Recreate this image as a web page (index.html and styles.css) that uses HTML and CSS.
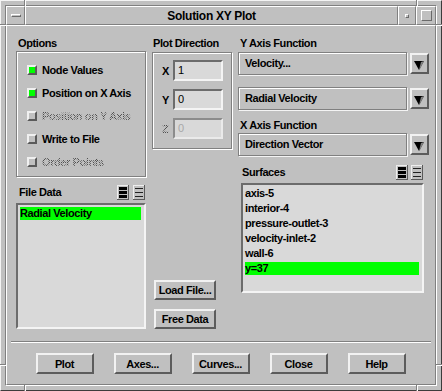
FILE: index.html
```html
<!DOCTYPE html>
<html>
<head>
	<title>Solution XY Plot</title>
	<link rel="stylesheet" href="styles.css">
</head>
<body>
	<!-- window frame with the little resize notches in the corners -->
	<div class="window">
		<span class="notch-v nv-tl"></span>
		<span class="notch-v nv-tr"></span>
		<span class="notch-v nv-bl"></span>
		<span class="notch-v nv-br"></span>
		<span class="notch-h nh-lt"></span>
		<span class="notch-h nh-lb"></span>
		<span class="notch-h nh-rt"></span>
		<span class="notch-h nh-rb"></span>

		<div class="client">
			<div class="titlebar">
				<div class="tb-cell tb-menu"><span class="menu-bar"></span></div>
				<div class="tb-cell tb-title">Solution XY Plot</div>
				<div class="tb-cell tb-min"><span class="min-dot"></span></div>
				<div class="tb-cell tb-max"><span class="max-box"></span></div>
			</div>

			<div class="panel">
				<div class="columns">
					<!-- left: options + file data -->
					<div class="col col-left">
						<div class="label">Options</div>
						<div class="group options">
							<div class="toggle"><span class="check on"></span><span>Node Values</span></div>
							<div class="toggle"><span class="check on"></span><span>Position on X Axis</span></div>
							<div class="toggle"><span class="check"></span><span class="disabled">Position on Y Axis</span></div>
							<div class="toggle"><span class="check"></span><span>Write to File</span></div>
							<div class="toggle"><span class="check"></span><span class="disabled">Order Points</span></div>
						</div>
						<div class="list-head">
							<span class="label">File Data</span>
							<span class="modes">
								<svg width="12" height="15" viewBox="0 0 12 15"><rect width="12" height="15" fill="#5a5a5a"/><rect width="11" height="14" fill="#eeeeee"/><rect x="1" y="1" width="10" height="13" fill="#c0c0c0"/><rect x="2" y="2" width="8" height="11" fill="#000"/><rect x="2" y="5" width="8" height="1" fill="#bdbdbd"/><rect x="2" y="9" width="8" height="1" fill="#bdbdbd"/></svg>
								<svg width="12" height="15" viewBox="0 0 12 15"><rect width="12" height="15" fill="#5a5a5a"/><rect width="11" height="14" fill="#eeeeee"/><rect x="1" y="1" width="10" height="13" fill="#c0c0c0"/><rect x="2" y="3" width="8" height="1" fill="#222"/><rect x="2" y="7" width="8" height="1" fill="#222"/><rect x="2" y="11" width="8" height="1" fill="#222"/></svg>
							</span>
						</div>
						<div class="list file-list">
							<div class="item selected">Radial Velocity</div>
						</div>
					</div>

					<!-- middle: plot direction + file buttons -->
					<div class="col col-mid">
						<div class="label">Plot Direction</div>
						<div class="group direction">
							<div class="field-row"><span class="axis">X</span><span class="field">1</span></div>
							<div class="field-row"><span class="axis">Y</span><span class="field">0</span></div>
							<div class="field-row"><span class="axis disabled">Z</span><span class="field field-off">0</span></div>
						</div>
						<div class="side-buttons">
							<button class="btn btn-side">Load File...</button>
							<button class="btn btn-side">Free Data</button>
						</div>
					</div>

					<!-- right: axis functions + surfaces -->
					<div class="col col-right">
						<div class="label">Y Axis Function</div>
						<div class="option-row first">
							<div class="option">Velocity...</div>
							<button class="arrow-btn"><svg width="15" height="17" viewBox="0 0 15 17"><polygon points="2,6 12,6 7,15" fill="#000"/><polygon points="9,7 12,6 7.5,15 7.5,13" fill="#808080"/></svg></button>
						</div>
						<div class="option-row second">
							<div class="option">Radial Velocity</div>
							<button class="arrow-btn"><svg width="15" height="17" viewBox="0 0 15 17"><polygon points="2,6 12,6 7,15" fill="#000"/><polygon points="9,7 12,6 7.5,15 7.5,13" fill="#808080"/></svg></button>
						</div>
						<div class="label label-x">X Axis Function</div>
						<div class="option-row third">
							<div class="option">Direction Vector</div>
							<button class="arrow-btn"><svg width="15" height="17" viewBox="0 0 15 17"><polygon points="2,6 12,6 7,15" fill="#000"/><polygon points="9,7 12,6 7.5,15 7.5,13" fill="#808080"/></svg></button>
						</div>
						<div class="surfaces">
							<div class="list-head">
								<span class="label">Surfaces</span>
								<span class="modes modes-wide">
									<svg width="12" height="15" viewBox="0 0 12 15"><rect width="12" height="15" fill="#5a5a5a"/><rect width="11" height="14" fill="#eeeeee"/><rect x="1" y="1" width="10" height="13" fill="#c0c0c0"/><rect x="2" y="2" width="8" height="11" fill="#000"/><rect x="2" y="5" width="8" height="1" fill="#bdbdbd"/><rect x="2" y="9" width="8" height="1" fill="#bdbdbd"/></svg>
									<svg width="12" height="15" viewBox="0 0 12 15"><rect width="12" height="15" fill="#5a5a5a"/><rect width="11" height="14" fill="#eeeeee"/><rect x="1" y="1" width="10" height="13" fill="#c0c0c0"/><rect x="2" y="3" width="8" height="1" fill="#222"/><rect x="2" y="7" width="8" height="1" fill="#222"/><rect x="2" y="11" width="8" height="1" fill="#222"/></svg>
								</span>
							</div>
							<div class="list surface-list">
								<div class="item">axis-5</div>
								<div class="item">interior-4</div>
								<div class="item">pressure-outlet-3</div>
								<div class="item">velocity-inlet-2</div>
								<div class="item">wall-6</div>
								<div class="item selected">y=37</div>
							</div>
						</div>
					</div>
				</div>

				<div class="separator"></div>

				<div class="actions">
					<button class="btn btn-action">Plot</button>
					<button class="btn btn-action">Axes...</button>
					<button class="btn btn-action">Curves...</button>
					<button class="btn btn-action">Close</button>
					<button class="btn btn-action">Help</button>
				</div>
			</div>
		</div>
	</div>
</body>
</html>
```

FILE: styles.css
```css
body {
	margin: 0;
	background-color: #c0c0c0;
	font: bold 11px "Liberation Sans", Arial, sans-serif;
	letter-spacing: -0.4px;
	color: #000;
}

/* window frame */
.window {
	position: relative;
	width: 442px;
	height: 391px;
	box-sizing: border-box;
	border: 1px solid;
	border-color: #f4f4f4 #3c3c3c #3c3c3c #f4f4f4;
	padding: 4px;
}
.notch-v {
	position: absolute;
	width: 1px;
	height: 6px;
	background-color: #808080;
	border-right: 1px solid #fff;
}
.notch-h {
	position: absolute;
	width: 6px;
	height: 1px;
	background-color: #808080;
	border-bottom: 1px solid #fff;
}
.nv-tl { left: 23px; top: -1px; }
.nv-tr { left: 415px; top: -1px; }
.nv-bl { left: 23px; bottom: -1px; }
.nv-br { left: 415px; bottom: -1px; }
.nh-lt { left: -1px; top: 23px; }
.nh-lb { left: -1px; top: 363px; }
.nh-rt { right: -1px; top: 23px; }
.nh-rb { right: -1px; top: 363px; }

.client {
	height: 100%;
	box-sizing: border-box;
	border: 1px solid;
	border-color: #808080 #fff #fff #808080;
	display: flex;
	flex-direction: column;
}

/* title bar */
.titlebar {
	display: flex;
	height: 19px;
	flex: none;
}
.tb-cell {
	box-sizing: border-box;
	border: 1px solid;
	border-color: #fff #808080 #808080 #fff;
	display: flex;
	align-items: center;
	justify-content: center;
}
.tb-menu { width: 19px; }
.tb-title {
	flex: 1;
	font-size: 12px;
	letter-spacing: -0.3px;
}
.tb-min { width: 18px; }
.tb-max { width: 20px; }
.menu-bar {
	width: 10px;
	height: 3px;
	box-sizing: border-box;
	border: 1px solid;
	border-color: #fff #6a6a6a #6a6a6a #fff;
}
.min-dot {
	width: 4px;
	height: 4px;
	box-sizing: border-box;
	border: 1px solid;
	border-color: #fff #6a6a6a #6a6a6a #fff;
}
.max-box {
	width: 11px;
	height: 11px;
	box-sizing: border-box;
	border: 1px solid;
	border-color: #fff #6a6a6a #6a6a6a #fff;
}

/* main panel */
.panel {
	flex: 1;
	box-sizing: border-box;
	border: 1px solid;
	border-color: #fff #808080 #808080 #fff;
	padding-top: 11px;
}
.columns {
	display: flex;
	height: 292px;
	padding-left: 9px;
}
.col {
	display: flex;
	flex-direction: column;
}
.col-left { width: 130px; }
.col-mid { width: 80px; margin-left: 6px; }
.col-right { width: 191px; margin-left: 6px; }

.label {
	line-height: 13px;
	padding-left: 2px;
}
.col-mid .label { padding-left: 1px; }

.group {
	box-sizing: border-box;
	border: 1px solid #808080;
	box-shadow: inset 1px 1px 0 #fff, 1px 1px 0 #fff;
}

/* options */
.options {
	margin-top: 1px;
	height: 126px;
	padding-top: 6px;
}
.toggle {
	display: flex;
	align-items: center;
	height: 23px;
	padding-left: 10px;
}
.check {
	width: 10px;
	height: 10px;
	box-sizing: border-box;
	border: 2px solid;
	border-color: #f0f0f0 #5a5a5a #5a5a5a #f0f0f0;
	background-color: #c0c0c0;
	margin-right: 5px;
}
.check.on {
	background-color: #00ff00;
}
.disabled {
	color: transparent;
	background: repeating-conic-gradient(#505050 0 25%, #c0c0c0 0 50%) 0 0 / 2px 2px;
	-webkit-background-clip: text;
	background-clip: text;
}

/* lists */
.list-head {
	display: flex;
	justify-content: space-between;
	align-items: center;
	height: 15px;
	margin-top: 8px;
}
.list-head .label { padding-left: 3px; }
.modes {
	display: flex;
	gap: 4px;
	padding-right: 1px;
}
.modes svg { display: block; }
.modes-wide { gap: 3px; }

.list {
	box-sizing: border-box;
	border: 2px solid;
	border-color: #6c6c6c #f4f4f4 #f4f4f4 #6c6c6c;
	background-color: #d9d9d9;
	padding: 2px 3px 0 2px;
	margin-top: 3px;
}
.file-list { height: 126px; }
.item {
	height: 13px;
	line-height: 13px;
	margin-bottom: 2px;
	white-space: nowrap;
}
.item.selected {
	background-color: #00ff00;
}

/* plot direction */
.direction {
	margin-top: 2px;
	height: 97px;
	padding-top: 7px;
}
.field-row {
	display: flex;
	align-items: center;
	height: 21px;
	margin-bottom: 8px;
}
.axis {
	width: 12px;
	margin-left: 8px;
	padding-left: 1px;
	box-sizing: border-box;
}
.field {
	width: 50px;
	height: 21px;
	box-sizing: border-box;
	border: 2px solid;
	border-color: #6c6c6c #f4f4f4 #f4f4f4 #6c6c6c;
	background-color: #d9d9d9;
	padding-left: 3px;
	line-height: 17px;
	font-weight: normal;
	letter-spacing: 0;
}
.field-off {
	color: #a8a8a8;
	border-color: #8c8c8c #eaeaea #eaeaea #8c8c8c;
}
.side-buttons {
	margin-top: auto;
	display: flex;
	flex-direction: column;
	gap: 9px;
	padding-left: 2px;
}

/* buttons */
.btn {
	font: inherit;
	letter-spacing: inherit;
	color: #000;
	background-color: #c0c0c0;
	box-sizing: border-box;
	border: 2px solid;
	border-color: #f2f2f2 #5c5c5c #5c5c5c #f2f2f2;
	padding: 0;
	cursor: pointer;
}
.btn-side {
	width: 62px;
	height: 20px;
}

/* option menus */
.option-row {
	display: flex;
	align-items: center;
}
.option-row.first { margin-top: 2px; }
.option-row.second { margin-top: 12px; }
.option-row.third { margin-top: 1px; }
.label-x { margin-top: 9px; }
.option {
	width: 169px;
	height: 23px;
	box-sizing: border-box;
	border: 1px solid #808080;
	box-shadow: inset 1px 1px 0 #fff, 1px 1px 0 #f4f4f4;
	padding-left: 6px;
	line-height: 21px;
}
.arrow-btn {
	width: 19px;
	height: 21px;
	margin-left: 3px;
	box-sizing: border-box;
	border: 2px solid;
	border-color: #f2f2f2 #5c5c5c #5c5c5c #f2f2f2;
	background-color: #c0c0c0;
	padding: 0;
}
.arrow-btn svg { display: block; }

/* surfaces */
.surfaces {
	margin-left: 3px;
	width: 183px;
	margin-top: 1px;
}
.surfaces .list-head .label { padding-left: 1px; }
.surface-list { height: 110px; }

/* bottom */
.separator {
	margin: 12px 4px 0;
	border-top: 1px solid #808080;
	border-bottom: 1px solid #fff;
}
.actions {
	display: flex;
	justify-content: center;
	gap: 20px;
	margin-top: 10px;
	padding-right: 1px;
}
.btn-action {
	width: 58px;
	height: 21px;
}
```
